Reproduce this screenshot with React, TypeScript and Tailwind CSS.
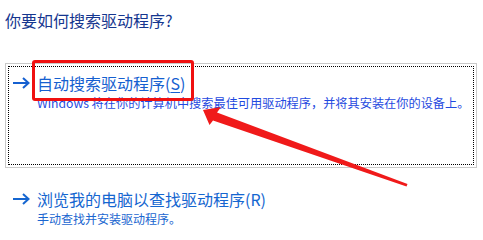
import React from "react";

const Arrow = ({ color }: { color: string }) => (
  <svg width="18" height="12" viewBox="0 0 18 12" className="shrink-0">
    <path d="M1 6 H16.5" stroke={color} strokeWidth="2" fill="none" />
    <path d="M11 1 L16.5 6 L11 11" stroke={color} strokeWidth="2" fill="none" strokeLinejoin="miter" />
  </svg>
);

export default function App() {
  const font = { fontFamily: '"Noto Sans CJK SC", "Noto Sans", sans-serif' };
  return (
    <div className="relative w-[483px] h-[236px] bg-white overflow-hidden" style={font}>
      <div className="pl-[5px] pt-[8px] text-[16px] leading-[24px] text-[#15368f]">
        你要如何搜索驱动程序?
      </div>

      <div className="ml-[5px] mt-[31px] w-[472px] h-[105px] border border-[#c9c9c9] p-[2px]">
        <div className="h-full border border-dotted border-black pl-[3px] pt-[5px]">
          <div className="flex items-center gap-[7px]">
            <Arrow color="#1560d0" />
            <span className="text-[16px] leading-[22px] text-[#1560d0]">
              自动搜索驱动程序(<span className="underline underline-offset-2">S</span>)
            </span>
          </div>
          <div className="pl-[25px] text-[12.2px] leading-[18px] text-[#1f4ae0] whitespace-nowrap">
            Windows 将在你的计算机中搜索最佳可用驱动程序，并将其安装在你的设备上。
          </div>
        </div>
      </div>

      <div className="ml-[12px] mt-[20px]">
        <div className="flex items-center gap-[7px]">
          <Arrow color="#1566d0" />
          <span className="text-[16px] leading-[22px] text-[#1566d0]">
            浏览我的电脑以查找驱动程序(R)
          </span>
        </div>
        <div className="pl-[25px] text-[12px] leading-[18px] text-[#1a66d0]">
          手动查找并安装驱动程序。
        </div>
      </div>

      {/* red highlight rectangle */}
      <div className="absolute left-[32px] top-[60px] w-[162px] h-[41px] border-[3px] border-[#f01010] rounded-[3px]" />

      {/* red annotation arrow */}
      <svg className="absolute left-0 top-0" width="483" height="236" viewBox="0 0 483 236">
        <polygon
          points="203,110 221,107 217,112.5 407.5,184 406.5,186.5 213,120.5 209.5,125"
          fill="#f01a1a"
        />
      </svg>
    </div>
  );
}
